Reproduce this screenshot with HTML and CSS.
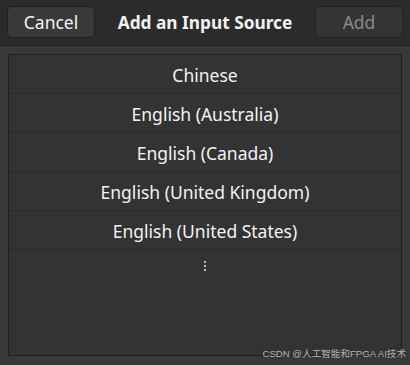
FILE: index.html
```html
<!DOCTYPE html>
<html lang="en">
<head>
    <meta charset="UTF-8">
    <title>Add an Input Source</title>
    <link rel="stylesheet" href="styles.css">
</head>
<body>
    <div class="dialog">
        <div class="header">
            <button class="btn">Cancel</button>
            <div class="title">Add an Input Source</div>
            <button class="btn disabled">Add</button>
        </div>
        <div class="content">
            <div class="list">
                <div class="row">Chinese</div>
                <div class="row">English (Australia)</div>
                <div class="row">English (Canada)</div>
                <div class="row">English (United Kingdom)</div>
                <div class="row">English (United States)</div>
                <div class="row more">
                    <span class="dots"><i></i><i></i><i></i></span>
                </div>
            </div>
        </div>
        <div class="watermark">CSDN @人工智能和FPGA AI技术</div>
    </div>
</body>
</html>
```

FILE: styles.css
```css
body {
    margin: 0;
    background-color: #383838;
    font-family: "Noto Sans", "Open Sans", sans-serif;
    color: #f2f2f2;
}

.dialog {
    position: relative;
    width: 410px;
    height: 365px;
    display: flex;
    flex-direction: column;
}

.header {
    height: 46px;
    box-sizing: border-box;
    background-color: #2b2b2b;
    border-bottom: 1px solid #1e1e1e;
    display: flex;
    align-items: center;
    justify-content: space-between;
    padding: 0 7px;
}

.btn {
    width: 88px;
    height: 32px;
    margin-top: -1px;
    background-color: #393939;
    border: 1px solid #1f1f1f;
    border-radius: 5px;
    color: #f2f2f2;
    font-family: inherit;
    font-size: 17.5px;
    padding: 0;
}

.btn.disabled {
    background-color: #343434;
    border-color: #242424;
    color: #8a8a8a;
}

.title {
    font-weight: bold;
    font-size: 17.3px;
    margin-top: -1px;
}

.content {
    flex: 1;
    padding: 8px;
    background-color: #383838;
}

.list {
    height: 300px;
    background-color: #333333;
    border: 1px solid #1f1f1f;
}

.row {
    height: 36px;
    padding-top: 2px;
    border-bottom: 1px solid #2a2a2a;
    display: flex;
    align-items: center;
    justify-content: center;
    font-size: 17.5px;
}

.row.more {
    height: 30px;
    border-bottom: none;
}

.dots {
    display: flex;
    flex-direction: column;
    gap: 2px;
    margin-top: -3px;
}

.dots i {
    display: block;
    width: 2px;
    height: 2px;
    background-color: #bdbdbd;
}

.watermark {
    position: absolute;
    right: 4px;
    bottom: 5px;
    font-family: "Liberation Sans", "Noto Sans CJK SC", sans-serif;
    font-size: 9.6px;
    color: #b4b4b4;
}
```
